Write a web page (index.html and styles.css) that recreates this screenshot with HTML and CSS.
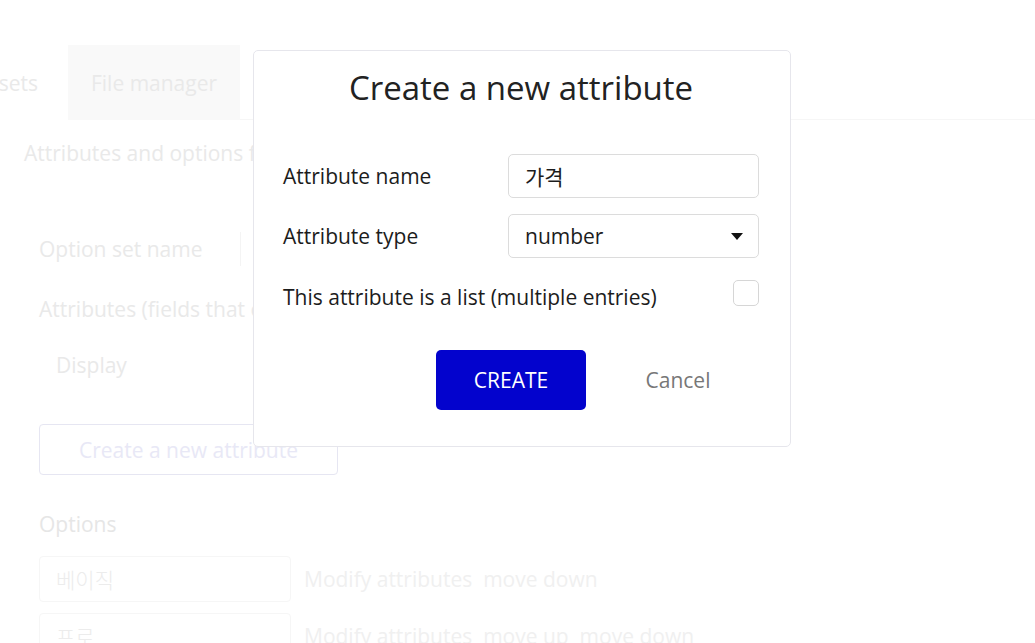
FILE: index.html
```html
<!DOCTYPE html>
<html>
<head>
<meta charset="utf-8">
<link rel="stylesheet" href="styles.css">
</head>
<body>
<div class="page">
  <div class="tabs">
    <div class="tab tab-first">Option sets</div>
    <div class="tab tab-active">File manager</div>
    <div class="tab-line"></div>
  </div>
  <div class="subtitle">Attributes and options for this option set</div>
  <div class="panel">
    <div class="field-row">
      <span class="bg-label">Option set name</span>
      <span class="bg-input"></span>
    </div>
    <div class="bg-label attr-head">Attributes (fields that each option has)</div>
    <div class="display">Display</div>
    <div class="bg-button">Create a new attribute</div>
    <div class="options-head">Options</div>
    <div class="opt-row">
      <div class="opt-box">베이직</div>
      <div class="opt-links">Modify attributes&nbsp;&nbsp;move down</div>
    </div>
    <div class="opt-row">
      <div class="opt-box">프로</div>
      <div class="opt-links">Modify attributes&nbsp;&nbsp;move up&nbsp;&nbsp;move down</div>
    </div>
  </div>
</div>

<div class="dialog">
  <h1 class="dlg-title">Create a new attribute</h1>
  <div class="dlg-row dlg-first">
    <span class="dlg-label">Attribute name</span>
    <div class="dlg-input">가격</div>
  </div>
  <div class="dlg-row">
    <span class="dlg-label">Attribute type</span>
    <div class="dlg-input dlg-select">
      <span>number</span>
      <svg class="caret" width="12" height="7" viewBox="0 0 12 7"><path d="M0 0 H12 L6 7 Z" fill="#111"/></svg>
    </div>
  </div>
  <div class="dlg-row dlg-check-row">
    <span class="dlg-label">This attribute is a list (multiple entries)</span>
    <span class="checkbox"></span>
  </div>
  <div class="dlg-buttons">
    <div class="btn-create">CREATE</div>
    <div class="btn-cancel">Cancel</div>
  </div>
</div>
</body>
</html>
```

FILE: styles.css
```css
html, body {
  margin: 0;
  padding: 0;
  background: #ffffff;
  overflow: hidden;
  height: 643px;
}
body {
  font-family: "Open Sans", "Noto Sans CJK KR", sans-serif;
}
.page {
  position: relative;
  width: 1035px;
  height: 643px;
  overflow: hidden;
  color: #e9e9e9;
  font-size: 21px;
}
.tabs {
  display: flex;
  align-items: stretch;
  margin-top: 45px;
  height: 75px;
}
.tab {
  display: flex;
  align-items: center;
  justify-content: center;
}
.tab-first {
  width: 158px;
  margin-left: -90px;
  justify-content: flex-end;
  padding-right: 30px;
  box-sizing: border-box;
}
.tab-active {
  width: 172px;
  background: #f9f9f9;
}
.tab-line {
  flex: 1;
  border-bottom: 1px solid #f6f6f6;
}
.subtitle {
  margin-left: 24px;
  margin-top: 19px;
  line-height: 28px;
}
.panel {
  padding-left: 39px;
  padding-top: 65px;
}
.field-row {
  display: flex;
  align-items: center;
  height: 34px;
}
.bg-label {
  line-height: 28px;
}
.bg-input {
  margin-left: 38px;
  width: 300px;
  height: 34px;
  border-left: 1px solid #f4f4f4;
}
.attr-head {
  margin-top: 29px;
  white-space: nowrap;
}
.display {
  margin-left: 17px;
  margin-top: 28px;
  line-height: 28px;
}
.bg-button {
  margin-top: 45px;
  width: 297px;
  height: 49px;
  border: 1px solid #e6e6f2;
  border-radius: 4px;
  color: #e8e8f6;
  display: flex;
  align-items: center;
  justify-content: center;
}
.options-head {
  margin-top: 35px;
  line-height: 28px;
  color: #e6e6e6;
}
.opt-row {
  display: flex;
  align-items: center;
  margin-top: 18px;
}
.opt-row + .opt-row {
  margin-top: 11px;
}
.opt-box {
  width: 234px;
  height: 44px;
  border: 1px solid #f6f6f6;
  border-radius: 4px;
  padding-left: 16px;
  display: flex;
  align-items: center;
  color: #ececec;
  font-weight: 300;
}
.opt-links {
  margin-left: 13px;
  color: #f0f0f0;
}

.dialog {
  position: fixed;
  left: 253px;
  top: 50px;
  width: 476px;
  height: 395px;
  padding: 0 31px 0 29px;
  background: #ffffff;
  border: 1px solid #e6e6ec;
  border-radius: 5px;
  color: #1c1c1c;
  box-sizing: content-box;
}
.dlg-title {
  margin: 15px 0 0 0;
  font-size: 33px;
  font-weight: 400;
  text-align: center;
  line-height: 44px;
  color: #222;
}
.dlg-row {
  display: flex;
  align-items: center;
  justify-content: space-between;
  margin-top: 16px;
  font-size: 21px;
}
.dlg-row.dlg-first {
  margin-top: 44px;
}
.dlg-label {
  line-height: 28px;
}
.dlg-input {
  width: 233px;
  height: 42px;
  border: 1px solid #dcdcdc;
  border-radius: 5px;
  padding: 0 0 0 16px;
  display: flex;
  align-items: center;
  font-size: 21px;
  color: #1c1c1c;
}
.dlg-select {
  justify-content: space-between;
  padding-right: 15px;
  width: 218px;
}
.caret {
  display: block;
}
.dlg-check-row {
  margin-top: 25px;
}
.checkbox {
  width: 24px;
  height: 24px;
  border: 1px solid #d6d6d6;
  border-radius: 5px;
  margin-top: -8px;
}
.dlg-buttons {
  display: flex;
  align-items: center;
  margin-top: 39px;
  padding-left: 153px;
}
.btn-create {
  width: 150px;
  height: 60px;
  background: #0303cd;
  color: #fff;
  border-radius: 5px;
  display: flex;
  align-items: center;
  justify-content: center;
  font-size: 21px;
}
.btn-cancel {
  width: 150px;
  margin-left: 17px;
  text-align: center;
  font-size: 21px;
  color: #777;
}
```
